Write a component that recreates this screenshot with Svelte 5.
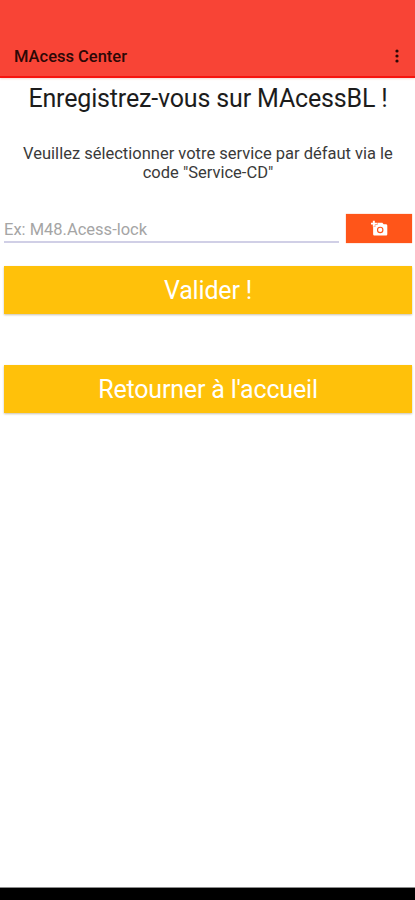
<script>
  let code = $state('');
</script>

<div class="screen">
  <header>
    <span class="brand">MAcess Center</span>
    <button class="menu" aria-label="Menu">
      <svg width="6" height="16" viewBox="0 0 6 16">
        <circle cx="3" cy="3" r="1.6" />
        <circle cx="3" cy="8" r="1.6" />
        <circle cx="3" cy="13" r="1.6" />
      </svg>
    </button>
  </header>

  <main>
    <h1>Enregistrez-vous sur MAcessBL !</h1>
    <p>Veuillez sélectionner votre service par défaut via le<br />code "Service-CD"</p>
    <div class="row">
      <input bind:value={code} placeholder="Ex: M48.Acess-lock" />
      <button class="scan" aria-label="Photo">
        <svg width="17" height="17" viewBox="0 0 24 24" fill="#fff">
          <path d="M2.6 4V1h2.8v3h3v2.4h-3v3H2.6v-3H0V4h2.6zM6 10V7h3V4h7l1.83 2H21c1.1 0 2 .9 2 2v12c0 1.1-.9 2-2 2H5c-1.1 0-2-.9-2-2V10h3z" />
          <circle cx="13" cy="14" r="3.8" fill="none" stroke="#ff5519" stroke-width="1.6" />
        </svg>
      </button>
    </div>
    <button class="action">Valider !</button>
    <button class="action home">Retourner à l'accueil</button>
  </main>

  <footer></footer>
</div>

<style>
  .screen {
    width: 415px;
    height: 900px;
    display: flex;
    flex-direction: column;
    overflow: hidden;
    background: #fff;
    font-family: Roboto, "Liberation Sans", sans-serif;
    color: #1c1c1c;
  }
  button {
    border: 0;
    padding: 0;
    font-family: inherit;
    color: #fff;
  }
  header {
    flex: none;
    box-sizing: border-box;
    height: 78px;
    padding: 35px 15px 0 14px;
    display: flex;
    justify-content: space-between;
    align-items: center;
    background: #f84436;
    border-bottom: 2px solid #f6140e;
    box-shadow: 0 1px 2px #f8d8d0;
  }
  .brand {
    padding-top: 2px;
    font-size: 16.5px;
    font-weight: 500;
    line-height: 20px;
    color: #2c0806;
    white-space: nowrap;
  }
  .menu {
    display: flex;
    background: none;
  }
  .menu svg {
    fill: #2c0806;
  }
  main {
    flex: 1;
    padding: 5px 3px 0 4px;
    display: flex;
    flex-direction: column;
  }
  h1 {
    margin: 0;
    font-size: 25px;
    letter-spacing: -0.16px;
    font-weight: 400;
    line-height: 32px;
    text-align: center;
    white-space: nowrap;
  }
  p {
    margin: 29px 0 0;
    font-size: 16.5px;
    line-height: 19px;
    text-align: center;
    white-space: nowrap;
    color: #3a3a3a;
  }
  .row {
    margin-top: 32px;
    display: flex;
    justify-content: space-between;
  }
  input {
    box-sizing: border-box;
    width: 335px;
    height: 29px;
    padding: 4px 0 0;
    border: 0;
    border-bottom: 2px solid #d0cfe6;
    outline: 0;
    background: none;
    font-family: inherit;
    font-size: 16.5px;
    color: #1c1c1c;
  }
  input::placeholder {
    color: #a5a5a5;
    opacity: 1;
  }
  .scan {
    width: 66px;
    height: 29px;
    display: flex;
    align-items: center;
    justify-content: center;
    background: #ff5519;
    box-shadow: 0 0 1px #ff8860;
  }
  .action {
    box-sizing: border-box;
    height: 48px;
    margin-top: 23px;
    padding-top: 2px;
    background: #ffc10a;
    box-shadow: 0 1px 2px #c9c0ac;
    font-size: 25px;
    letter-spacing: -0.18px;
    line-height: 46px;
  }
  .home {
    margin-top: 51px;
  }
  footer {
    flex: none;
    height: 12px;
    background: #000;
    border-top: 1px solid #8c8c8c;
  }
</style>
